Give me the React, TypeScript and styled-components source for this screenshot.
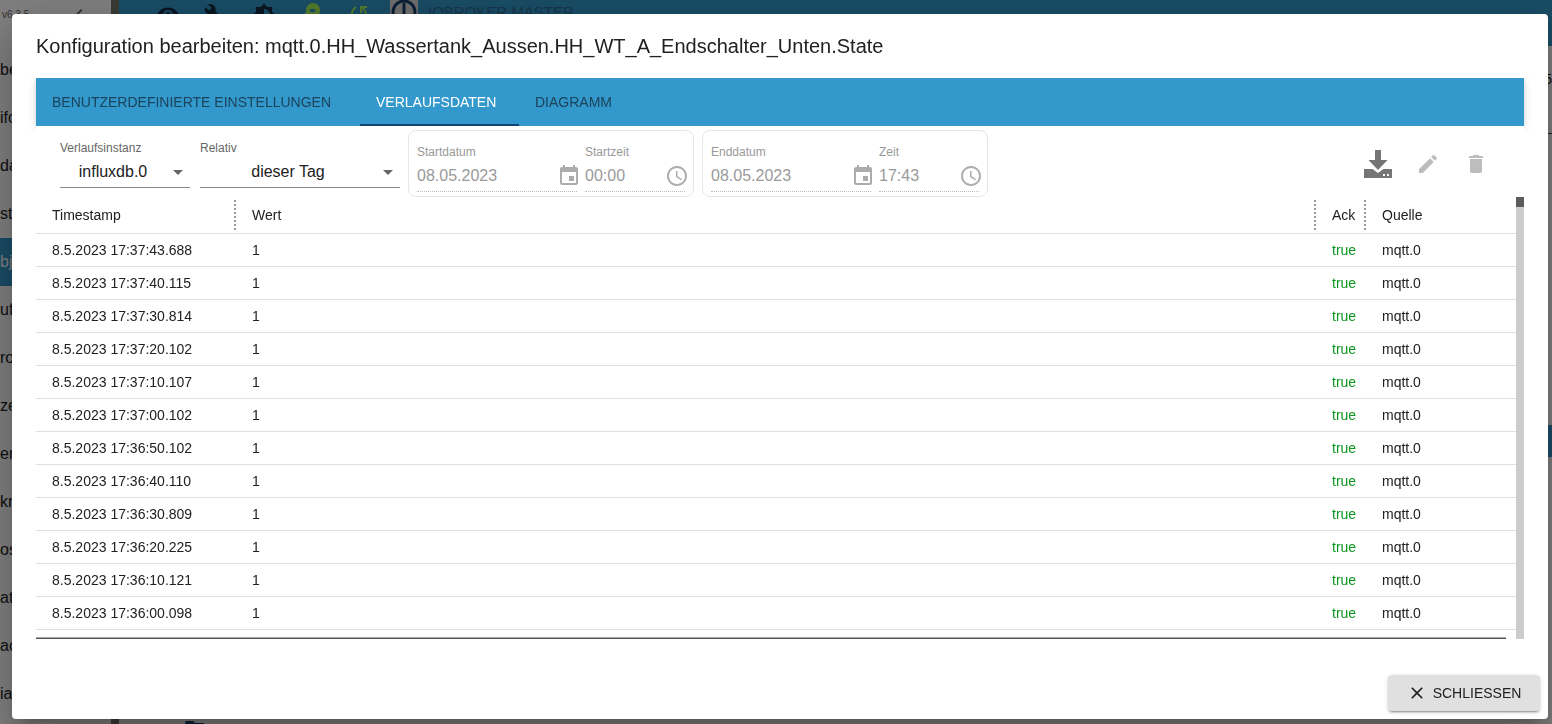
import React from 'react';
import styled, { createGlobalStyle } from 'styled-components';
import {
  MdAccessTime, MdBrightness6, MdBuild, MdChevronLeft, MdClose, MdDelete, MdEdit,
  MdEvent, MdFolder, MdVisibility,
} from 'react-icons/md';

const GlobalStyle = createGlobalStyle`
  *, *::before, *::after { box-sizing: border-box; }
  body {
    margin: 0;
    background: #fff;
    color: #212121;
    font: 14px/20px "Liberation Sans", Arial, sans-serif;
  }
  button, input, select { font: inherit; color: inherit; }
`;

/* ---------- page behind the dialog ---------- */

const Page = styled.div`
  display: flex;
  height: 100vh;
  overflow: hidden;
`;

const Sidebar = styled.nav`
  width: 119px;
  flex: none;
  border-right: 8px solid #77776c;
`;

const SidebarHead = styled.div`
  display: flex;
  align-items: center;
  justify-content: space-between;
  height: 30px;
  margin-bottom: 16px;
  padding: 0 20px 0 2px;
  font-size: 10px;
  color: #666;
`;

const SideLink = styled.a<{ $active?: boolean }>`
  display: flex;
  align-items: center;
  height: 48px;
  font-size: 16px;
  text-decoration: none;
  color: ${(p) => (p.$active ? '#fff' : '#212121')};
  background: ${(p) => (p.$active ? '#39c' : 'transparent')};
`;

const Main = styled.main`
  flex: 1;
  display: flex;
  flex-direction: column;
`;

const AppBar = styled.header`
  flex: none;
  display: flex;
  align-items: flex-start;
  height: 46px;
  padding: 3px 0 0 37px;
  gap: 24px;
  background: #39c;
  color: #122c44;
`;

const AppIcon = styled.span<{ $accent?: boolean }>`
  display: flex;
  width: 24px;
  color: ${(p) => (p.$accent ? '#a5f25a' : 'inherit')};
`;

const Brand = styled.span`
  display: flex;
  align-items: flex-start;
  gap: 10px;
  margin: -3px 0 0 -6px;
  font-size: 15px;
  line-height: 24px;
  color: #2b6c92;
`;

const LogoBox = styled.span`
  display: flex;
  width: 28px;
  height: 28px;
  background: #ddd;
`;

const PageBody = styled.div`
  flex: 1;
  display: flex;
  flex-direction: column;
  justify-content: space-between;
  align-items: stretch;
`;

const PageTools = styled.div`
  height: 88px;
  padding: 23px 0 0;
  border-bottom: 1px solid #444;
  text-align: right;
`;

const SelectedRow = styled.div`
  height: 32px;
  margin-top: 291px;
  margin-bottom: auto;
  background: #39c;
`;

const FolderRow = styled.div`
  height: 7px;
  padding-left: 64px;
  color: #16446e;
`;

/* ---------- dialog ---------- */

const Backdrop = styled.div`
  position: fixed;
  inset: 0;
  display: flex;
  padding: 14px 4px 5px 12px;
  background: rgba(0, 0, 0, 0.5);
`;

const Dialog = styled.section`
  flex: 1;
  min-width: 0;
  display: flex;
  flex-direction: column;
  background: #fff;
  border-radius: 4px;
  box-shadow: 0 11px 15px -7px rgba(0, 0, 0, 0.2), 0 24px 38px 3px rgba(0, 0, 0, 0.14),
    0 9px 46px 8px rgba(0, 0, 0, 0.12);
`;

const Title = styled.h2`
  margin: 0;
  padding: 16px 24px;
  font-size: 20px;
  font-weight: 400;
  line-height: 32px;
`;

const Content = styled.div`
  flex: 1;
  min-height: 0;
  display: flex;
  flex-direction: column;
  padding: 0 24px 28px;
`;

const Tabs = styled.div`
  flex: none;
  display: flex;
  height: 48px;
  background: #39c;
  box-shadow: 0 2px 4px -1px rgba(0, 0, 0, 0.2), 0 1px 10px rgba(0, 0, 0, 0.12);
  clip-path: inset(0 -8px -6px -8px);
`;

const Tab = styled.button<{ $width: number; $active?: boolean }>`
  min-width: ${(p) => p.$width}px;
  padding: 2px 16px 0;
  border: 0;
  border-bottom: 2px solid ${(p) => (p.$active ? '#164477' : 'transparent')};
  background: none;
  text-align: left;
  text-transform: uppercase;
  white-space: nowrap;
  color: ${(p) => (p.$active ? '#fff' : '#1b435a')};
`;

const Toolbar = styled.div`
  position: relative;
  flex: none;
  display: flex;
  align-items: flex-start;
  gap: 8px;
  padding: 4px 24px 0;
  background: #fff;
`;

const SelectGroup = styled.div`
  display: flex;
  gap: 10px;
  padding-top: 10px;
`;

const SelectField = styled.div<{ $width: number }>`
  position: relative;
  display: flex;
  flex-direction: column;
  width: ${(p) => p.$width}px;
  border-bottom: 1px solid #888;
`;

const Label = styled.label<{ $muted?: boolean }>`
  font-size: 12px;
  line-height: 16px;
  color: ${(p) => (p.$muted ? '#999' : '#666')};
`;

const Select = styled.select`
  appearance: none;
  width: 100%;
  height: 31px;
  padding: 0 24px 0 0;
  border: 0;
  background: none;
  font-size: 16px;
  text-align: center;
  text-align-last: center;
`;

const Caret = styled.span`
  position: absolute;
  right: 7px;
  bottom: 12px;
  border: 5px solid transparent;
  border-top-color: #666;
  border-bottom: 0;
  pointer-events: none;
`;

const Period = styled.fieldset`
  display: flex;
  gap: 8px;
  margin: 0;
  padding: 13px 8px 4px;
  border: 1px solid #e6e6e6;
  border-radius: 8px;
`;

const PeriodField = styled.div<{ $width: number }>`
  width: ${(p) => p.$width}px;
  display: flex;
  flex-direction: column;
`;

const PeriodInput = styled.div`
  display: flex;
  align-items: center;
  height: 32px;
  border-bottom: 1px dotted #bbb;

  input {
    flex: 1;
    min-width: 0;
    padding: 0;
    border: 0;
    background: none;
    font-size: 16px;
    color: #9a9a9a;
  }
  svg {
    flex: none;
    margin-right: -4px;
    color: #acacac;
  }
`;

const Actions = styled.div`
  display: flex;
  align-items: center;
  margin: 10px 0 0 auto;
`;

const IconButton = styled.button<{ $muted?: boolean; $wide?: boolean }>`
  display: flex;
  align-items: center;
  justify-content: center;
  width: ${(p) => (p.$wide ? 52 : 48)}px;
  height: 48px;
  padding: 0;
  border: 0;
  background: none;
  color: ${(p) => (p.$muted ? '#bdbdbd' : '#757575')};
`;

const TableArea = styled.div`
  flex: 1;
  min-height: 0;
  display: flex;
`;

const TableScroll = styled.div`
  flex: 1;
  min-width: 0;
  display: flex;
  flex-direction: column;
  justify-content: space-between;
  overflow: hidden;
`;

const HorizontalThumb = styled.div`
  flex: none;
  height: 2px;
  margin-right: 10px;
  background: #555;
  border-top: 1px solid #aaa;
`;

const ScrollTrack = styled.div`
  flex: none;
  width: 8px;
  background: #ccc;
`;

const ScrollThumb = styled.div`
  height: 10px;
  background: #5c5c5c;
`;

const Table = styled.table`
  width: 100%;
  table-layout: fixed;
  border-collapse: separate;
  border-spacing: 0;
`;

const Col = styled.col<{ $width?: number }>`
  width: ${(p) => (p.$width ? `${p.$width}px` : 'auto')};
`;

const HeadCell = styled.th<{ $handle?: boolean }>`
  position: relative;
  height: 37px;
  padding: 0 0 0 16px;
  border-bottom: 1px solid #e0e0e0;
  font-weight: 400;
  text-align: left;

  &::after {
    content: '';
    display: ${(p) => (p.$handle ? 'block' : 'none')};
    position: absolute;
    top: 3px;
    right: 0;
    height: 30px;
    border-right: 2px dotted #999;
  }
`;

const Cell = styled.td<{ $ok?: boolean }>`
  height: 33px;
  padding: 0 0 0 16px;
  border-bottom: 1px solid #e0e0e0;
  white-space: nowrap;
  color: ${(p) => (p.$ok ? '#0a951f' : 'inherit')};
`;

const Footer = styled.footer`
  flex: none;
  display: flex;
  justify-content: flex-end;
  padding: 8px;
`;

const CloseButton = styled.button`
  display: flex;
  align-items: center;
  justify-content: center;
  gap: 6px;
  min-width: 152px;
  height: 36px;
  padding: 0 16px;
  border: 0;
  border-radius: 4px;
  background: #e0e0e0;
  text-transform: uppercase;
  box-shadow: 0 3px 1px -2px rgba(0, 0, 0, 0.2), 0 2px 2px rgba(0, 0, 0, 0.14),
    0 1px 5px rgba(0, 0, 0, 0.12);
`;

const menu = ['be', 'ifo', 'da', 'st', 'bj', 'uf', 'ro', 'ze', 'er', 'kri', 'os', 'at', 'ac', 'ia'];

const times = [
  '17:37:43.688', '17:37:40.115', '17:37:30.814', '17:37:20.102', '17:37:10.107', '17:37:00.102',
  '17:36:50.102', '17:36:40.110', '17:36:30.809', '17:36:20.225', '17:36:10.121', '17:36:00.098',
];

const DownloadIcon = () => (
  <svg width="28" height="28" viewBox="0 0 28 28" fill="currentColor" aria-hidden="true">
    <path d="M11 0h6v10h6.500L14 20 4.500 10H11z" />
    <path fillRule="evenodd" d="M0 19h8.500l5.500 4 5.500-4H28v9H0zM19 24v2h2v-2zM23 24v2h2v-2z" />
  </svg>
);

const HeadIcon = () => (
  <svg width="24" height="24" viewBox="0 0 24 24" fill="currentColor" aria-hidden="true">
    <path fillRule="evenodd" d="M13 0a7 7 0 0 1 7 7c0 3-1 4-2 6v7H9v-3H6v-4H4l2-5c0-5 3-8 7-8zM10 6v3h5V6z" />
  </svg>
);

const SyncIcon = () => (
  <svg width="24" height="24" viewBox="0 0 24 24" fill="none" stroke="currentColor" strokeWidth="2" aria-hidden="true">
    <path d="M8 4C4 7 3 11 4 15M19 4h-6v6M13 4c5 3 6 8 4 13M2 18h6v-6" />
  </svg>
);

const BrandLogo = () => (
  <svg width="28" height="28" viewBox="0 0 28 28" fill="none" stroke="#17406b" strokeWidth="3" aria-hidden="true">
    <circle cx="14" cy="12" r="11" />
    <path d="M14 3v22" />
  </svg>
);

interface PeriodProps {
  id: string;
  dateLabel: string;
  date: string;
  timeLabel: string;
  time: string;
}

const PeriodBox = ({ id, dateLabel, date, timeLabel, time }: PeriodProps) => (
  <Period disabled>
    <PeriodField $width={160}>
      <Label $muted htmlFor={`${id}-date`}>{dateLabel}</Label>
      <PeriodInput>
        <input id={`${id}-date`} defaultValue={date} />
        <MdEvent size={24} />
      </PeriodInput>
    </PeriodField>
    <PeriodField $width={100}>
      <Label $muted htmlFor={`${id}-time`}>{timeLabel}</Label>
      <PeriodInput>
        <input id={`${id}-time`} defaultValue={time} />
        <MdAccessTime size={24} />
      </PeriodInput>
    </PeriodField>
  </Period>
);

export default function App() {
  return (
    <>
      <GlobalStyle />
      <Page>
        <Sidebar>
          <SidebarHead>v6.3.5<MdChevronLeft size={24} /></SidebarHead>
          {menu.map((item) => (
            <SideLink key={item} href="#" $active={item === 'bj'}>{item}</SideLink>
          ))}
        </Sidebar>
        <Main>
          <AppBar>
            <AppIcon><MdVisibility size={24} /></AppIcon>
            <AppIcon><MdBuild size={20} /></AppIcon>
            <AppIcon><MdBrightness6 size={24} /></AppIcon>
            <AppIcon $accent><HeadIcon /></AppIcon>
            <AppIcon $accent><SyncIcon /></AppIcon>
            <Brand><LogoBox><BrandLogo /></LogoBox>IOBROKER MASTER</Brand>
          </AppBar>
          <PageBody>
            <PageTools>5</PageTools>
            <SelectedRow />
            <FolderRow><MdFolder size={24} /></FolderRow>
          </PageBody>
        </Main>
      </Page>
      <Backdrop>
        <Dialog role="dialog" aria-labelledby="dialog-title">
          <Title id="dialog-title">
            Konfiguration bearbeiten: mqtt.0.HH_Wassertank_Aussen.HH_WT_A_Endschalter_Unten.State
          </Title>
          <Content>
            <Tabs role="tablist">
              <Tab role="tab" $width={324}>Benutzerdefinierte Einstellungen</Tab>
              <Tab role="tab" $width={159} $active aria-selected>Verlaufsdaten</Tab>
              <Tab role="tab" $width={112}>Diagramm</Tab>
            </Tabs>
            <Toolbar>
              <SelectGroup>
                <SelectField $width={130}>
                  <Label htmlFor="instance">Verlaufsinstanz</Label>
                  <Select id="instance"><option>influxdb.0</option></Select>
                  <Caret />
                </SelectField>
                <SelectField $width={200}>
                  <Label htmlFor="relative">Relativ</Label>
                  <Select id="relative"><option>dieser Tag</option></Select>
                  <Caret />
                </SelectField>
              </SelectGroup>
              <PeriodBox id="start" dateLabel="Startdatum" date="08.05.2023" timeLabel="Startzeit" time="00:00" />
              <PeriodBox id="end" dateLabel="Enddatum" date="08.05.2023" timeLabel="Zeit" time="17:43" />
              <Actions>
                <IconButton $wide aria-label="Exportieren"><DownloadIcon /></IconButton>
                <IconButton $muted disabled aria-label="Bearbeiten"><MdEdit size={24} /></IconButton>
                <IconButton $muted disabled aria-label="Löschen"><MdDelete size={24} /></IconButton>
              </Actions>
            </Toolbar>
            <TableArea>
              <TableScroll>
                <Table>
                  <colgroup>
                    <Col $width={200} /><Col /><Col $width={50} /><Col $width={150} />
                  </colgroup>
                  <thead>
                    <tr>
                      <HeadCell $handle>Timestamp</HeadCell>
                      <HeadCell $handle>Wert</HeadCell>
                      <HeadCell $handle>Ack</HeadCell>
                      <HeadCell>Quelle</HeadCell>
                    </tr>
                  </thead>
                  <tbody>
                    {times.map((time) => (
                      <tr key={time}>
                        <Cell>8.5.2023 {time}</Cell>
                        <Cell>1</Cell>
                        <Cell $ok>true</Cell>
                        <Cell>mqtt.0</Cell>
                      </tr>
                    ))}
                  </tbody>
                </Table>
                <HorizontalThumb />
              </TableScroll>
              <ScrollTrack><ScrollThumb /></ScrollTrack>
            </TableArea>
          </Content>
          <Footer>
            <CloseButton><MdClose size={20} />Schliessen</CloseButton>
          </Footer>
        </Dialog>
      </Backdrop>
    </>
  );
}
